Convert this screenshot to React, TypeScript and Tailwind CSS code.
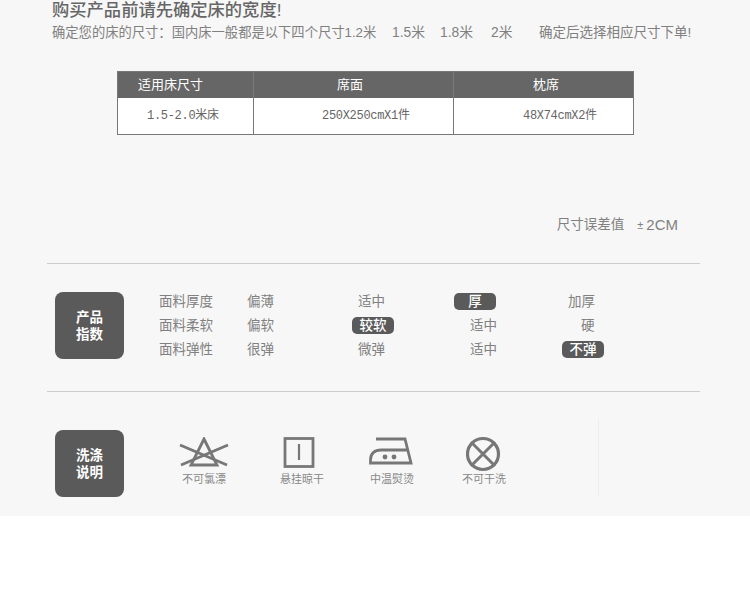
const cjk = "font-['Liberation_Sans','Noto_Sans_CJK_SC',sans-serif]"

function Pill({ children }: { children: string }) {
  return (
    <span className="inline-block h-[17px] w-[42px] rounded-[5px] bg-[#5a5a5a] text-center text-[13.5px] font-medium leading-[17px] text-white">
      {children}
    </span>
  )
}

function Tag({ lines }: { lines: string[] }) {
  return (
    <div className="flex h-[67px] w-[69px] shrink-0 flex-col items-center justify-center rounded-[8px] bg-[#5a5a5a] text-[13.5px] font-bold leading-[17px] text-white">
      {lines.map((line) => (
        <span key={line}>{line}</span>
      ))}
    </div>
  )
}

const rows = [
  { label: "面料厚度", mt: "mt-0", cells: [["偏薄", "w-[111px]"], ["适中", "w-[96px]"], ["厚", "w-[114px]", "pill"], ["加厚", ""]] },
  { label: "面料柔软", mt: "mt-[5px]", cells: [["偏软", "w-[105px]"], ["较软", "w-[118px]", "pill"], ["适中", "w-[111px]"], ["硬", ""]] },
  { label: "面料弹性", mt: "mt-[5px]", cells: [["很弹", "w-[111px]"], ["微弹", "w-[112px]"], ["适中", "w-[92px]"], ["不弹", "", "pill"]] },
]

const care = [
  {
    label: "不可氯漂",
    width: "w-[84px]",
    icon: (
      <svg width="50" height="34" viewBox="0 0 50 34" fill="none" stroke="#777" strokeWidth="2.8">
        <path d="M25 2 L38 28 H12 Z" />
        <path d="M1 8 L48 28" />
        <path d="M49 8 L2 28" />
      </svg>
    ),
  },
  {
    label: "悬挂晾干",
    width: "w-[112px]",
    icon: (
      <svg width="40" height="34" viewBox="0 0 40 34" fill="none" stroke="#777">
        <rect x="3" y="1.5" width="28" height="28" strokeWidth="2.8" />
        <path d="M17 7 V23" strokeWidth="2.2" />
      </svg>
    ),
  },
  {
    label: "中温熨烫",
    width: "w-[68px]",
    icon: (
      <svg width="46" height="34" viewBox="0 0 46 34" fill="none" stroke="#777" strokeWidth="2.8">
        <path d="M7 2 H36 L42 26 H1.5 V23 C1.5 16 6 13 12 13 H39" />
        <circle cx="16" cy="20" r="2.4" fill="#777" stroke="none" />
        <circle cx="25" cy="20" r="2.4" fill="#777" stroke="none" />
      </svg>
    ),
  },
  {
    label: "不可干洗",
    width: "w-[116px]",
    icon: (
      <svg width="36" height="36" viewBox="0 0 36 36" fill="none" stroke="#777">
        <circle cx="17" cy="18" r="15.5" strokeWidth="3.2" />
        <path d="M5 6 L29 30 M29 6 L5 30" strokeWidth="3" />
      </svg>
    ),
  },
]

export default function App() {
  return (
    <div className={`${cjk} w-[750px] bg-white`}>
      <div className="relative h-[516px] overflow-hidden bg-[#f7f7f7] pt-px text-[#808080]">
        <h1 className="ml-[52px] text-[17.3px] font-medium leading-[19px] text-[#666]">购买产品前请先确定床的宽度!</h1>
        <p className="ml-[52px] mt-[4px] flex text-[13.3px] leading-[18px]">
          <span className="w-[340px]">确定您的床的尺寸：国内床一般都是以下四个尺寸1.2米</span>
          <span className="w-[48px] text-[13.8px]">1.5米</span>
          <span className="w-[51px] text-[13.8px]">1.8米</span>
          <span className="w-[48px] text-[13.8px]">2米</span>
          <span className="text-[13.5px]">确定后选择相应尺寸下单!</span>
        </p>

        <div className="ml-[117px] mt-[29px] w-[517px] border border-[#777]">
          <div className="grid h-[26px] grid-cols-[136px_200px_1fr] bg-[#666] text-[13px] font-normal leading-[26px] text-white">
            <div className="border-r border-[#7a7a7a] pl-[20px]">适用床尺寸</div>
            <div className="border-r border-[#7a7a7a] pl-[83px]">席面</div>
            <div className="pl-[79px]">枕席</div>
          </div>
          <div className="grid h-[36px] grid-cols-[136px_200px_1fr] bg-white text-[12px] tracking-[-0.3px] leading-[37px] text-[#666] font-['Liberation_Mono','Noto_Sans_CJK_SC',monospace]">
            <div className="border-r border-[#777] pl-[29px]">1.5-2.0米床</div>
            <div className="border-r border-[#777] pl-[68px]">250X250cmX1件</div>
            <div className="pl-[69px]">48X74cmX2件</div>
          </div>
        </div>

        <div className="mt-[81px] flex items-center justify-end pr-[72px] text-[13.5px] leading-[18px]">
          <span>尺寸误差值</span>
          <span className="ml-[13px] text-[11px]">±</span>
          <span className="ml-[3px] text-[15px]">2CM</span>
        </div>

        <div className="ml-[47px] mt-[29px] h-px w-[653px] bg-[#ccc]" />

        <section className="ml-[55px] mt-[28px] flex items-center">
          <Tag lines={["产品", "指数"]} />
          <div className="ml-[35px] text-[13.5px] leading-[19px]">
            {rows.map((row) => (
              <div key={row.label} className={`flex h-[19px] items-center ${row.mt}`}>
                <span className="w-[88px] shrink-0">{row.label}</span>
                {row.cells.map(([text, width, kind]) => (
                  <span key={text} className={`block shrink-0 ${width}`}>
                    {kind === "pill" ? <Pill>{text}</Pill> : text}
                  </span>
                ))}
              </div>
            ))}
          </div>
        </section>

        <div className="ml-[47px] mt-[32px] h-px w-[653px] bg-[#ccc]" />

        <section className="ml-[55px] mt-[38px] flex">
          <Tag lines={["洗涤", "说明"]} />
          <div className="ml-[38px] flex pt-[6px]">
            {care.map((item) => (
              <div key={item.label} className={`${item.width} flex shrink-0 flex-col items-center`}>
                <div className="flex h-[36px] items-center">{item.icon}</div>
                <span className="w-[50px] text-center text-[11px] leading-[14px] text-[#888]">{item.label}</span>
              </div>
            ))}
          </div>
        </section>

        <div className="absolute left-[598px] top-[418px] h-[78px] w-px bg-[#eeeeee]" />
      </div>
      <div className="h-[92px]" />
    </div>
  )
}
